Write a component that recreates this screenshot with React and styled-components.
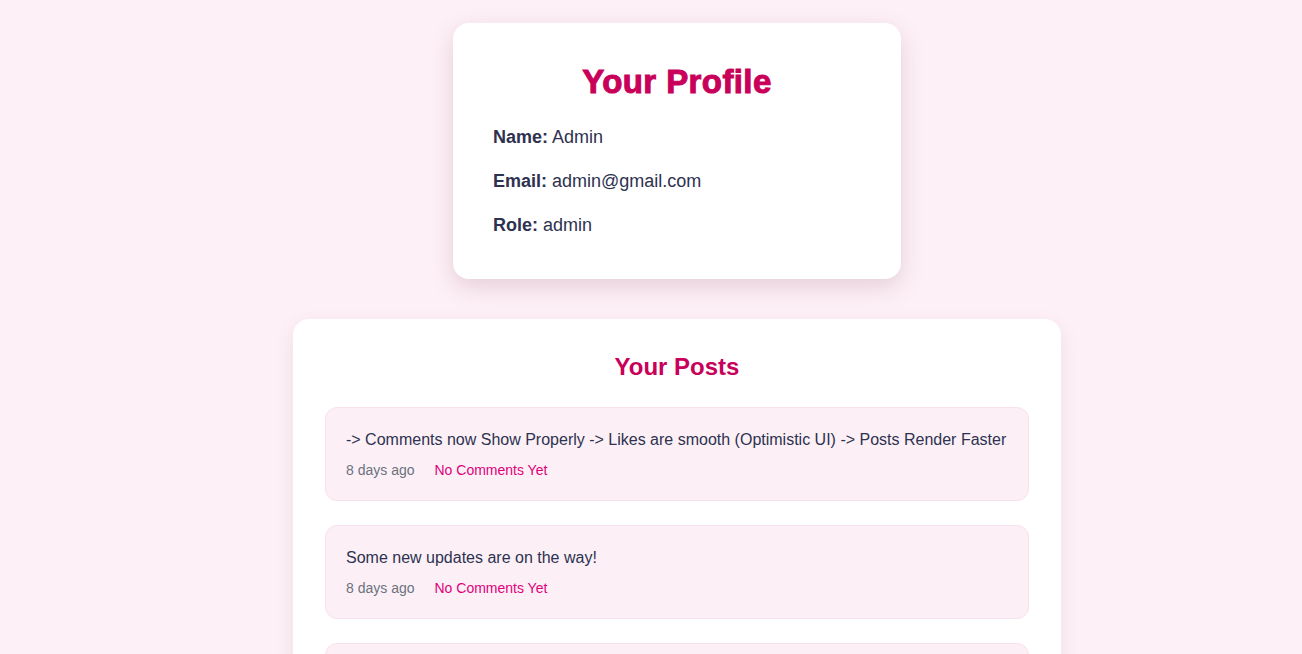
import React from 'react';
import styled, { createGlobalStyle } from 'styled-components';

const GlobalStyle = createGlobalStyle`
  html, body {
    margin: 0;
    background: #fdf0f6;
    font-family: "Liberation Sans", Arial, sans-serif;
    color: #2d3250;
  }
`;

const Page = styled.div`
  display: flex;
  flex-direction: column;
  align-items: center;
  padding: 23px 0 40px 52px;
  gap: 40px;
`;

const ProfileCard = styled.div`
  width: 448px;
  box-sizing: border-box;
  background: #fff;
  border-radius: 16px;
  padding: 40px 40px 43px;
  box-shadow: 0 8px 22px rgba(150, 90, 120, 0.22);
`;

const Title = styled.h1`
  margin: 0 0 27px;
  text-align: center;
  font-size: 33px;
  line-height: 37px;
  font-weight: 900;
  color: #c8005a;
  -webkit-text-stroke: 1px #c8005a;
  letter-spacing: 0.4px;
`;

const Field = styled.p`
  margin: 0 0 23px;
  font-size: 18px;
  line-height: 21px;
  color: #2d3250;
  &:last-child { margin-bottom: 0; }
  b { font-weight: 700; }
`;

const PostsCard = styled.div`
  width: 768px;
  box-sizing: border-box;
  background: #fff;
  border-radius: 16px;
  padding: 34px 32px 32px;
  box-shadow: 0 6px 18px rgba(150, 90, 120, 0.12);
`;

const SubTitle = styled.h2`
  margin: 0 0 26px;
  text-align: center;
  font-size: 24px;
  line-height: 28px;
  font-weight: 700;
  color: #c8005a;
`;

const Post = styled.div`
  background: #fcf0f6;
  border: 1px solid #f8e1ec;
  border-radius: 12px;
  padding: 20px 20px 20px;
  margin-bottom: 24px;
`;

const PostText = styled.p`
  margin: 0 0 8px;
  font-size: 16px;
  line-height: 24px;
  color: #2d3250;
`;

const Meta = styled.div`
  display: flex;
  gap: 20px;
  font-size: 14px;
  line-height: 20px;
`;

const Time = styled.span`
  color: #6b7280;
`;

const Comments = styled.span`
  color: #e0007a;
`;

const posts = [
  '-> Comments now Show Properly -> Likes are smooth (Optimistic UI) -> Posts Render Faster',
  'Some new updates are on the way!',
  'More features coming soon',
];

export default function App() {
  return (
    <>
      <GlobalStyle />
      <Page>
        <ProfileCard>
          <Title>Your Profile</Title>
          <Field><b>Name:</b> Admin</Field>
          <Field><b>Email:</b> admin@gmail.com</Field>
          <Field><b>Role:</b> admin</Field>
        </ProfileCard>
        <PostsCard>
          <SubTitle>Your Posts</SubTitle>
          {posts.map((text, i) => (
            <Post key={i}>
              <PostText>{text}</PostText>
              <Meta>
                <Time>8 days ago</Time>
                <Comments>No Comments Yet</Comments>
              </Meta>
            </Post>
          ))}
        </PostsCard>
      </Page>
    </>
  );
}
